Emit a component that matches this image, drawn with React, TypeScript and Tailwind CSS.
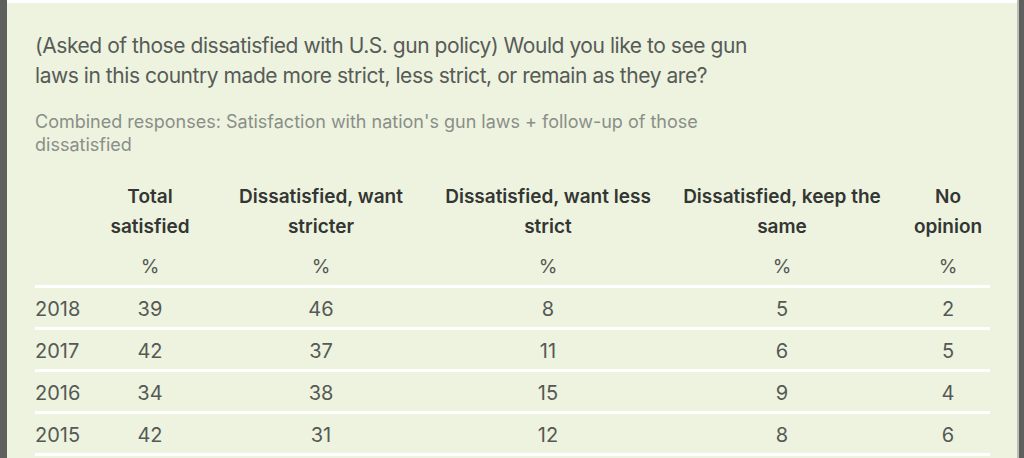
import React from "react"

const rows = [
    ["2018", "39", "46", "8", "5", "2"],
    ["2017", "42", "37", "11", "6", "5"],
    ["2016", "34", "38", "15", "9", "4"],
    ["2015", "42", "31", "12", "8", "6"],
]

const headers: string[][] = [
    ["Total", "satisfied"],
    ["Dissatisfied, want", "stricter"],
    ["Dissatisfied, want less", "strict"],
    ["Dissatisfied, keep the", "same"],
    ["No", "opinion"],
]

const cols = "grid grid-cols-[70px_90px_252px_202px_266px_66px]"

function Cell({ children }: { children: React.ReactNode }) {
    return <div className="flex justify-center whitespace-nowrap">{children}</div>
}

export default function App() {
    return (
        <div
            className="w-[1024px] h-[458px] overflow-hidden flex bg-[#6b6b69]"
            style={{ fontFamily: "Inter, 'Open Sans', sans-serif" }}
        >
            <div className="w-[7px] shrink-0 bg-[#5f5f5d]" />
            <div className="flex-1 flex flex-col border-t-[3px] border-white bg-[#edf3df] pl-[28px] pt-[28px] overflow-hidden">
                <h1 className="text-[21px] leading-[30px] text-[#575b57] tracking-[-0.45px]">
                    (Asked of those dissatisfied with U.S. gun policy) Would you like to see gun
                    <br />
                    laws in this country made more strict, less strict, or remain as they are?
                </h1>
                <p className="mt-[19px] text-[18px] leading-[23px] text-[#8a8e88]">
                    Combined responses: Satisfaction with nation's gun laws + follow-up of those
                    <br />
                    dissatisfied
                </p>

                <div className="mt-[26px] w-[955px]">
                    <div className={`${cols} text-[19px] leading-[30px] font-semibold text-[#333633]`}>
                        <div />
                        {headers.map((h) => (
                            <Cell key={h[0]}>
                                <div className="text-center">
                                    {h[0]}
                                    <br />
                                    {h[1]}
                                </div>
                            </Cell>
                        ))}
                    </div>
                    <div className={`${cols} mt-[10px] text-[19px] leading-[30px] text-[#555955]`}>
                        <div />
                        {headers.map((h) => (
                            <Cell key={h[0]}>%</Cell>
                        ))}
                    </div>
                    <div className="mt-[3px] h-[3px] bg-white" />
                    {rows.map((r) => (
                        <div key={r[0]}>
                            <div className={`${cols} h-[39px] items-center text-[20px] text-[#555955] pt-[3px]`}>
                                <div>{r[0]}</div>
                                {r.slice(1).map((v, i) => (
                                    <Cell key={i}>{v}</Cell>
                                ))}
                            </div>
                            <div className="h-[3px] bg-white" />
                        </div>
                    ))}
                </div>
            </div>
            <div className="w-[2px] shrink-0 bg-[#bdbdb9]" />
            <div className="w-[5px] shrink-0 bg-[#5f5f5d]" />
        </div>
    )
}
